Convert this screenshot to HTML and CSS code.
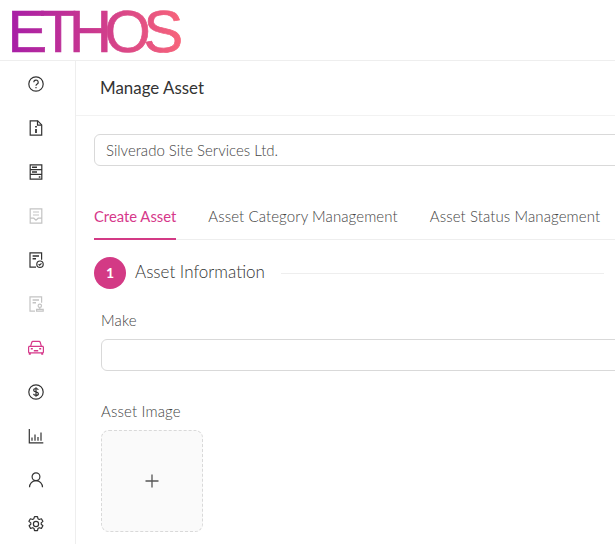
FILE: index.html
```html
<!DOCTYPE html>
<html lang="en">
<head>
<meta charset="utf-8">
<title>Manage Asset</title>
<link rel="stylesheet" href="styles.css">
</head>
<body>
<header class="topbar">
  <svg class="logo" viewBox="0 0 190 60">
    <defs><linearGradient id="logoGrad" gradientUnits="userSpaceOnUse" x1="12" y1="0" x2="181" y2="0"><stop offset="0" stop-color="#a81fa6"/><stop offset=".5" stop-color="#cc3a8e"/><stop offset="1" stop-color="#f7647a"/></linearGradient></defs>
    <text class="logo-text" x="7.500" y="51.500" fill="url(#logoGrad)" stroke="url(#logoGrad)">ETHOS</text>
  </svg>
</header>
<div class="shell">
  <nav class="sidebar">
    <div class="nav-item"><svg class="ico" viewBox="0 0 16 16"><circle cx="8" cy="8" r="7.200"/><path d="M5.800 6.300a2.200 2.200 0 1 1 3.400 1.800c-.8.500-1.200.9-1.200 1.700"/><path d="M8 11v1.300"/></svg></div>
    <div class="nav-item"><svg class="ico" viewBox="0 0 16 16"><path d="M2.200.8h7.500l4 4.100v10.300H2.200z"/><path d="M9.500.8v4.300h4.200"/><path d="M8 6v1.400M8 9v4" stroke-width="1.800"/></svg></div>
    <div class="nav-item"><svg class="ico" viewBox="0 0 16 16"><path d="M2.200.8h11.600v14.400H2.200zM2.200 5.600h11.600M2.200 10.400h11.600"/><path d="M4 3.200h5M4 8h5M10.800 12.900h1.600" stroke-width="1.500"/></svg></div>
    <div class="nav-item muted"><svg class="ico" viewBox="0 0 16 16"><path d="M2.200.8h11.600v14.400H2.200zM2.200 10.200h3.600l2.200 2 2.200-2h3.600"/><path d="M5 4h6M5 7h6"/></svg></div>
    <div class="nav-item"><svg class="ico" viewBox="0 0 16 16"><path d="M8 15.200H2V.8h11.600v7"/><path d="M4.600 4h6.400M4.600 6.800h3.400" stroke-width="1.500"/><circle cx="12" cy="12.200" r="3.200"/><path d="M10.600 12.200l1 1 1.900-1.900"/></svg></div>
    <div class="nav-item muted"><svg class="ico" viewBox="0 0 16 16"><path d="M7 15.200H2V.8h11.600v6"/><path d="M4.600 4h6.400M4.600 6.800h3.400" stroke-width="1.400"/><circle cx="11.800" cy="9.800" r="1.700"/><path d="M11.800 11.500v1.500M8.600 13.400h6.600v1.800H8.600z"/></svg></div>
    <div class="nav-item active"><svg class="ico" viewBox="0 0 16 15"><path d="M2.600 5.800 3.800 1.800c.2-.6.500-.9 1.100-.9h6.200c.6 0 .9.300 1.100.9l1.200 4"/><path d="M.6 5.800h14.800M1.500 5.800h13c.5 0 .9.400.9.900v4.900c0 .4-.3.700-.7.700H1.300c-.4 0-.7-.3-.7-.7V6.700c0-.5.400-.9.900-.9z"/><path d="M2.800 8.200h2M11.200 8.200h2M5.800 10.200h4.400" stroke-width="1.500"/><path d="M1.800 12.300v2M14.200 12.300v2" stroke-width="2"/></svg></div>
    <div class="nav-item"><svg class="ico" viewBox="0 0 16 16"><circle cx="8" cy="8" r="7.200"/><path d="M10.300 5.900C10 4.900 9.100 4.500 8 4.500c-1.300 0-2.300.6-2.300 1.700 0 2.400 4.700 1.100 4.700 3.600 0 1.100-1.100 1.700-2.400 1.700-1.200 0-2.200-.5-2.500-1.600M8 3.200v9.600"/></svg></div>
    <div class="nav-item"><svg class="ico" viewBox="0 0 16 16"><path d="M1.300 1v13.800h14"/><path d="M4 9.500v3.300M7 6.500v6.300M10 9v3.800M13 4.500v8.300" stroke-width="1.200"/></svg></div>
    <div class="nav-item"><svg class="ico" viewBox="0 0 16 16"><circle cx="8" cy="4.800" r="3.900"/><path d="M1.500 15.300c0-3.600 2.700-6.600 6.500-6.600s6.500 3 6.500 6.600"/></svg></div>
    <div class="nav-item"><svg class="ico" viewBox="0 0 16 16"><circle cx="8" cy="8" r="2.600"/><path d="M6.500.6h3l.5 2.200 1.200.7 2.200-.7 1.500 2.600-1.700 1.500v1.400l1.700 1.500-1.500 2.600-2.200-.7-1.200.7-.5 2.200h-3l-.5-2.200-1.200-.7-2.200.7-1.500-2.600 1.700-1.500V6.900L.9 5.400l1.500-2.600 2.200.7 1.200-.7z" stroke-linejoin="round"/></svg></div>
  </nav>
  <main class="main">
    <h1 class="page-title">Manage Asset</h1>
    <div class="content">
      <div class="select">Silverado Site Services Ltd.</div>
      <div class="tabs">
        <a class="tab tab-active">Create Asset</a>
        <a class="tab">Asset Category Management</a>
        <a class="tab">Asset Status Management</a>
      </div>
      <div class="step">
        <span class="step-num">1</span>
        <span class="step-title">Asset Information</span>
        <span class="step-line"></span>
      </div>
      <div class="field">
        <label class="label">Make</label>
        <div class="input"></div>
      </div>
      <div class="field upload-field">
        <label class="label">Asset Image</label>
        <div class="upload"><svg class="plus" viewBox="0 0 14 14"><path d="M7 .5v13M.5 7h13"/></svg></div>
      </div>
    </div>
  </main>
</div>
</body>
</html>
```
FILE: styles.css
```css
* { box-sizing: border-box; }
html, body { margin: 0; height: 544px; overflow: hidden; background: #fff; }
body { font-family: "Lato", "Open Sans", sans-serif; color: #555; width: 615px; }
.topbar { height: 61px; border-bottom: 1px solid #eeeeee; }
.logo { display: block; width: 190px; height: 60px; }
.logo-text { font-family: "Liberation Sans", Arial, sans-serif; font-size: 59.500px; letter-spacing: -7.300px; stroke-width: 0.700px; }
.shell { display: flex; height: 483px; }
.sidebar { flex: 0 0 76px; border-right: 1px solid #eeeeee; display: flex; flex-direction: column; padding-top: 1px; }
.nav-item { height: 44px; flex: none; display: flex; align-items: center; justify-content: center; padding-right: 3px; color: #333; }
.nav-item.muted { color: #c4c4c4; }
.nav-item.active { color: #d6388a; }
.ico { width: 16px; height: 16px; fill: none; stroke: currentColor; stroke-width: 1.200; overflow: visible; }
.main { flex: 1 1 auto; min-width: 0; }
.page-title { margin: 0; padding: 0 0 0 24px; height: 55px; line-height: 53px; font-size: 16.900px; font-weight: 400; color: #333; border-bottom: 1px solid #f2f2f2; }
.content { padding: 18px 0 0 18px; width: 800px; }
.select { height: 32px; width: 700px; border: 1px solid #d9d9d9; border-radius: 6px; padding: 0 11px; line-height: 30px; font-size: 15px; font-weight: 300; color: #444; }
.tabs { display: flex; gap: 32px; margin-top: 35px; height: 39px; border-bottom: 1px solid #eeeeee; }
.tab { height: 39px; line-height: 31px; font-size: 15px; font-weight: 300; letter-spacing: 0.100px; color: #444; }
.tab-active { color: #d6388a; font-weight: 400; font-size: 14.800px; letter-spacing: 0; border-bottom: 2px solid #d33a85; }
.step { display: flex; align-items: center; margin-top: 17px; height: 32px; }
.step-num { flex: none; width: 32px; height: 32px; border-radius: 50%; background: #d33a85; color: #fff; font-size: 14px; font-weight: 700; text-align: center; line-height: 32px; }
.step-title { margin-left: 9px; padding-bottom: 3px; font-size: 17px; font-weight: 300; color: #333; }
.step-line { flex: 0 0 323px; margin-left: 16px; height: 1px; background: #eeeeee; }
.field { margin-left: 7px; margin-top: 21px; }
.label { display: block; font-size: 15px; font-weight: 300; letter-spacing: 0.150px; line-height: 20px; color: #444; }
.input { margin-top: 9px; height: 32px; width: 700px; border: 1px solid #d9d9d9; border-radius: 6px; }
.upload-field { margin-top: 30px; }
.upload { margin-top: 9px; width: 102px; height: 102px; border: 1px dashed #d9d9d9; border-radius: 8px; background: #fafafa; display: flex; align-items: center; justify-content: center; }
.plus { width: 14px; height: 14px; fill: none; stroke: #555; stroke-width: 1.300; }
```
